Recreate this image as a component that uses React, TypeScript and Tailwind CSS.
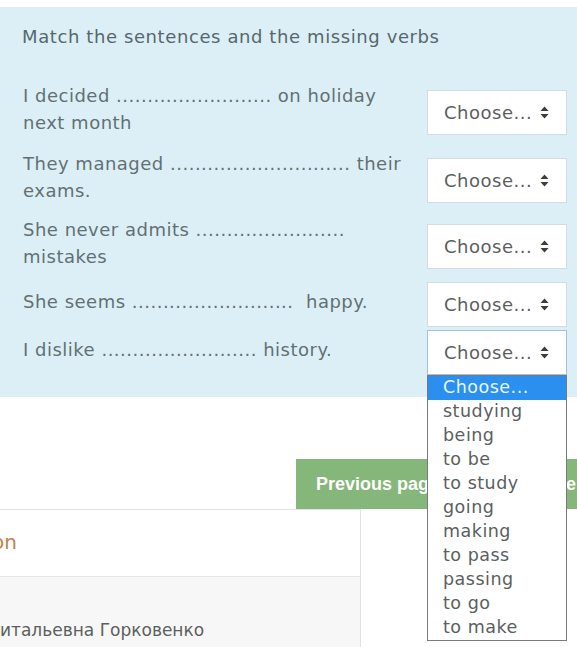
import React from 'react';

const rows = [
  { lines: ['I decided ......................... on holiday', 'next month'], h: 'h-[72px]' },
  { lines: ['They managed ............................. their', 'exams.'], h: 'h-[64px]' },
  { lines: ['She never admits ........................', 'mistakes'], h: 'h-[68px]' },
  { lines: ['She seems ..........................  happy.'], h: 'h-[48px]' },
  { lines: ['I dislike ......................... history.'], h: 'h-[48px]' },
];

const options = [
  'Choose...',
  'studying',
  'being',
  'to be',
  'to study',
  'going',
  'making',
  'to pass',
  'passing',
  'to go',
  'to make',
];

function UpDown() {
  return (
    <svg width="9" height="13" viewBox="0 0 9 13" className="shrink-0">
      <path d="M4.5 0.5 L8.5 5 L0.5 5 Z" fill="#3d3d3d" />
      <path d="M0.5 8 L8.5 8 L4.5 12.5 Z" fill="#3d3d3d" />
    </svg>
  );
}

function ChooseBox({ open }: { open?: boolean }) {
  return (
    <div
      className={`relative flex h-[45px] w-[140px] shrink-0 items-center justify-between bg-white pl-[16px] pr-[17px] text-[18px] tracking-[0.5px] text-[#5a5f61] border ${
        open ? 'border-[#9fc3dc]' : 'border-[#d3dde1]'
      }`}
    >
      <span>Choose...</span>
      <UpDown />
      {open && (
        <ul className="absolute left-[-1px] top-[44px] z-10 w-[140px] border border-[#7a7a7a] bg-white">
          {options.map((o, i) => (
            <li
              key={o}
              className={`flex h-[24px] items-center pl-[15px] text-[17.5px] leading-none ${
                i === 0 ? 'bg-[#2b8ff0] text-[#e6f7ff]' : 'text-[#5a5f61]'
              }`}
            >
              {o}
            </li>
          ))}
        </ul>
      )}
    </div>
  );
}

export default function App() {
  return (
    <div className="relative h-[647px] w-[577px] overflow-hidden bg-white pt-[7px] font-['DejaVu_Sans',sans-serif]">
      <div className="bg-[#ddeff6] pb-[21px] pl-[22px] pr-[10px] pt-[16px]">
        <h2 className="text-[18px] leading-[27px] tracking-[0.6px] text-[#56686d]">
          Match the sentences and the missing verbs
        </h2>
        <div className="mt-[26px]">
          {rows.map((r, i) => (
            <div key={i} className={`flex items-center justify-between ${r.h}`}>
              <div className="pb-[6px] pl-[1px] text-[18px] leading-[27px] tracking-[0.5px] text-[#627074] whitespace-pre">
                {r.lines.map((l) => (
                  <div key={l}>{l}</div>
                ))}
              </div>
              <ChooseBox open={i === 4} />
            </div>
          ))}
        </div>
      </div>

      <div className="mt-[62px] flex h-[50px] pl-[296px] font-['Liberation_Sans',sans-serif] text-[18px] font-bold text-white">
        <button className="flex shrink-0 items-center whitespace-nowrap bg-[#85b67a] pl-[20px] pr-[20px]">
          Previous page
        </button>
        <button className="ml-[11px] flex shrink-0 items-center whitespace-nowrap bg-[#85b67a] pl-[20px] pr-[20px]">
          Next page
        </button>
      </div>

      <div className="flex">
        <div className="w-[361px] border-r border-t border-[#e1e1e1]">
          <div className="-ml-[8px] flex h-[67px] items-center border-b border-[#e6e6e6] pb-[2px] text-[20px] text-[#c4814f]">
            on
          </div>
          <div className="h-[100px] bg-[#f7f7f7] pt-[41px] text-[17px] text-[#5c5f60]">
            итальевна Горковенко
          </div>
        </div>
      </div>
    </div>
  );
}
